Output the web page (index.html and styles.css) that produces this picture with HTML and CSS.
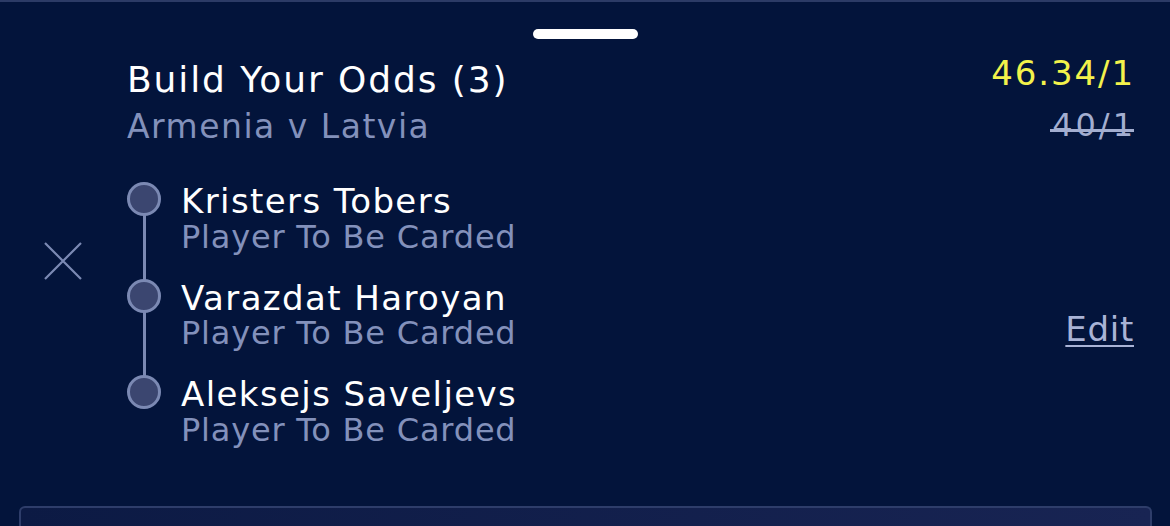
FILE: index.html
```html
<!DOCTYPE html>
<html lang="en">

<head>
    <meta charset="UTF-8">
    <meta name="viewport" content="width=device-width, initial-scale=1.0">
    <title>Bet Slip - Build Your Odds</title>
    <link rel="stylesheet" href="styles.css">
</head>

<body>
    <!-- Bet slip sheet -->
    <section class="sheet">
        <div class="handle"></div>

        <!-- Header -->
        <div class="slip-header">
            <div class="slip-title">
                <h1>Build Your Odds (3)</h1>
                <p class="match">Armenia v Latvia</p>
            </div>
            <div class="slip-odds">
                <p class="odds-new">46.34/1</p>
                <p class="odds-old"><span>40/1</span></p>
            </div>
        </div>

        <!-- Selections -->
        <div class="slip-body">
            <button class="remove-btn" aria-label="Remove">
                <svg width="40" height="40" viewBox="0 0 40 40">
                    <path d="M2 2 L38 38 M38 2 L2 38" stroke="#7b89b3" stroke-width="2.2" fill="none"/>
                </svg>
            </button>
            <ul class="legs">
                <li class="leg">
                    <span class="dot"></span>
                    <div class="leg-text">
                        <h2>Kristers Tobers</h2>
                        <p>Player To Be Carded</p>
                    </div>
                </li>
                <li class="leg">
                    <span class="dot"></span>
                    <div class="leg-text">
                        <h2>Varazdat Haroyan</h2>
                        <p>Player To Be Carded</p>
                    </div>
                </li>
                <li class="leg">
                    <span class="dot"></span>
                    <div class="leg-text">
                        <h2>Aleksejs Saveljevs</h2>
                        <p>Player To Be Carded</p>
                    </div>
                </li>
            </ul>
            <a class="edit-link" href="#">Edit</a>
        </div>

        <!-- Next card -->
        <div class="next-card"></div>
    </section>
</body>

</html>
```

FILE: styles.css
```css
/* General Styles */
body {
    font-family: 'DejaVu Sans', Verdana, sans-serif;
    margin: 0;
    padding: 0;
    background-color: #03143b; /* Navy background */
    color: #ffffff;
    height: 526px;
    overflow: hidden;
}

h1, h2, p {
    margin: 0;
    padding: 0;
    font-weight: normal;
}

ul {
    list-style: none;
    margin: 0;
    padding: 0;
}

/* Sheet */
.sheet {
    border-top: 2px solid #2c3b66;
    height: 524px;
    display: flex;
    flex-direction: column;
}

.handle {
    width: 105px;
    height: 10px;
    border-radius: 5px;
    background-color: #ffffff;
    margin: 27px auto 0;
}

/* Header */
.slip-header {
    display: flex;
    justify-content: space-between;
    padding: 18px 37px 0 127px;
}

.slip-title h1 {
    font-size: 36px;
    line-height: 45px;
    letter-spacing: 1.9px;
}

.slip-title .match {
    font-size: 33px;
    line-height: 49px;
    letter-spacing: 1.5px;
    color: #8391bb;
}

.slip-odds {
    text-align: right;
}

.odds-new {
    font-size: 34px;
    line-height: 32px;
    letter-spacing: 1.9px;
    margin-right: -2px;
    color: #f3f24b;
}

.odds-old {
    font-size: 32px;
    line-height: 41px;
    margin-top: 16px;
    color: #a3aed0;
}

.odds-old span {
    position: relative;
    display: inline-block;
    letter-spacing: 3px;
    margin-right: -3px;
}

/* strike sits low on the figures */
.odds-old span::after {
    content: '';
    position: absolute;
    left: -2px;
    right: 2px;
    top: 24px;
    height: 3px;
    background-color: #a3aed0;
}

/* Selections */
.slip-body {
    display: flex;
    align-items: flex-start;
    padding: 31px 37px 0 43px;
}

.remove-btn {
    background: none;
    border: none;
    padding: 0;
    margin-top: 59px;
    width: 40px;
    height: 40px;
}

.legs {
    margin-left: 44px;
    flex: 1;
}

.leg {
    position: relative;
    display: flex;
    align-items: flex-start;
    gap: 20px;
    height: 96.5px;
}

.leg:last-child {
    height: auto;
}

/* connector line between dots */
.leg:not(:last-child)::before {
    content: '';
    position: absolute;
    left: 15.5px;
    top: 30px;
    width: 3px;
    height: 70px;
    background-color: #7b89b3;
}

.dot {
    width: 28px;
    height: 28px;
    border-radius: 50%;
    background-color: #3b4670;
    border: 3px solid #7b89b3;
    flex-shrink: 0;
    position: relative;
}

.leg-text {
    padding-top: 3px;
}

.leg-text h2 {
    font-size: 34px;
    line-height: 32.5px;
    letter-spacing: 1.4px;
}

.leg-text p {
    font-size: 32px;
    line-height: 39px;
    letter-spacing: 0.8px;
    color: #8391bb;
}

.edit-link {
    font-size: 34px;
    line-height: 40px;
    letter-spacing: 0.7px;
    margin-top: 127px;
    margin-right: -1px;
    color: #a9b3d6;
    text-decoration: underline;
    text-decoration-thickness: 2px;
    text-underline-offset: 4px;
}

/* Next card peeking at bottom */
.next-card {
    margin: auto 18px 0 19px;
    height: 18px;
    border: 2px solid #2e3d6a;
    border-bottom: none;
    border-radius: 6px 6px 0 0;
    background: linear-gradient(90deg, #0c1a44, #182453);
}
```
